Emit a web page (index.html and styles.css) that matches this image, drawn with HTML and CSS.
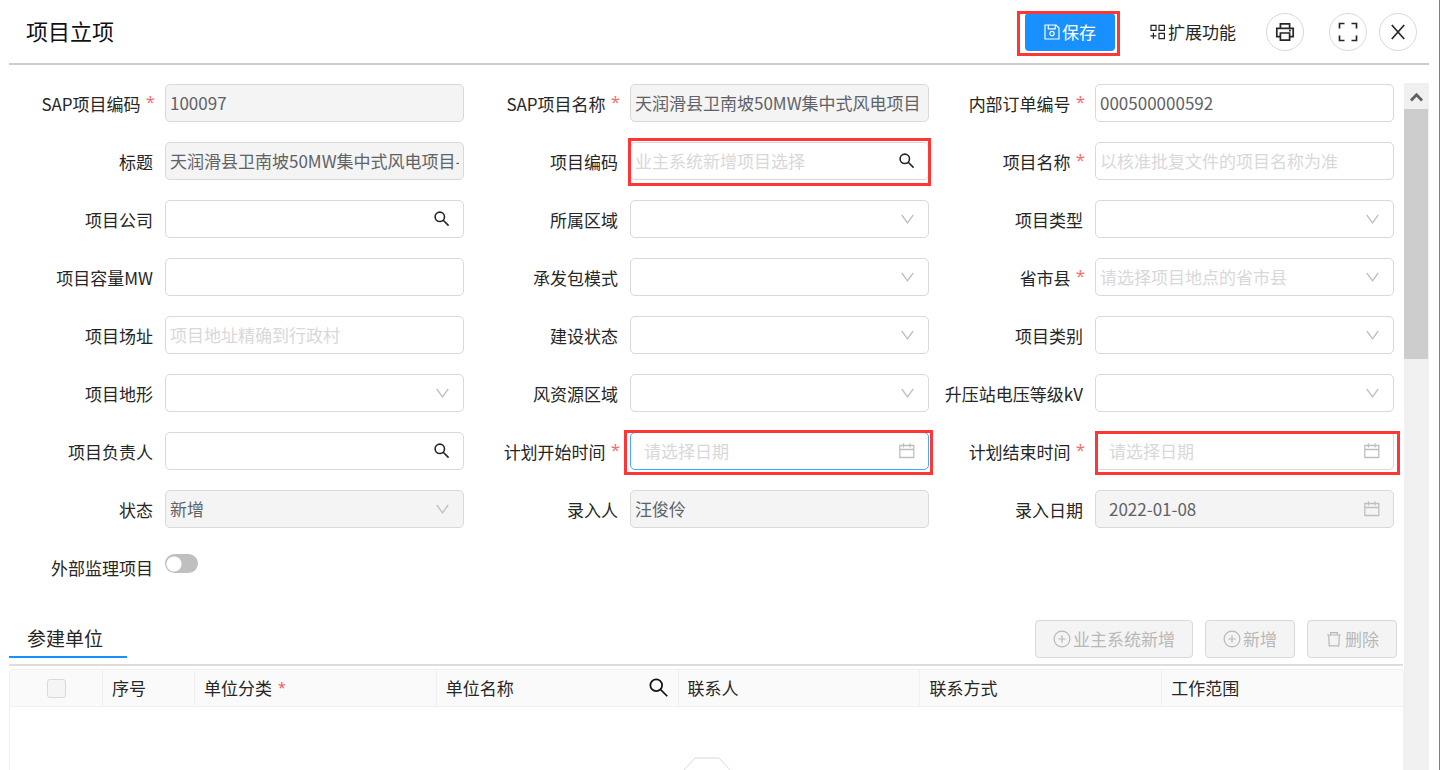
FILE: index.html
```html
<!DOCTYPE html>
<html lang="zh-CN">
<head>
<meta charset="utf-8">
<title>项目立项</title>
<link rel="stylesheet" href="styles.css">
</head>
<body>
<svg class="sprite" aria-hidden="true">
  <symbol id="i-search" viewBox="0 0 16 16"><circle cx="5.8" cy="5.8" r="4.7"/><path d="M9.2 9.2L14.6 14.6"/></symbol>
  <symbol id="i-down" viewBox="0 0 16 16"><path d="M2.8 4L8.5 11.8L14.2 4"/></symbol>
  <symbol id="i-cal" viewBox="0 0 16 16"><path d="M.8 2.5H14.8V14.5H.8ZM.8 6.5H14.8M4.5 .2V4.4M11 .2V4.4"/></symbol>
  <symbol id="i-plus" viewBox="0 0 18 18"><circle cx="9" cy="9" r="7.9"/><path d="M9 5.3V12.7M5.3 9H12.7"/></symbol>
  <symbol id="i-trash" viewBox="0 0 18 18"><path d="M2 5H16M5.6 5V2.6H12.4V5M3.7 5L4.2 15.8H13.8L14.3 5"/></symbol>
</svg>
<div class="page">
  <header class="header">
    <h1 class="title">项目立项</h1>
    <div class="marked">
      <button class="save" type="button">
        <svg class="icon-16" viewBox="0 0 16 16"><path d="M1 1H12L15 4V15H1ZM4.3 1V4.8H11.2V1"/><circle cx="8" cy="9.6" r="2.2"/></svg>
        <span>保存</span>
      </button>
      <span class="mark mark-save"></span>
    </div>
    <button class="more" type="button">
      <svg class="icon-16" viewBox="0 0 16 16"><path d="M1 1.4H6V6.4H1ZM9 1.4H14.4V6.4H9ZM9 9.4H14.4V14.6H9ZM3.4 8.8V14.8M.4 11.8H6.4"/></svg>
      <span>扩展功能</span>
    </button>
    <button class="round round-print" type="button" aria-label="打印">
      <svg class="icon-20" viewBox="0 0 20 20"><path d="M5.4 6.2V1.8H14.6V6.2M5.2 14.6H1.8V6.4H18.2V14.6H14.8M5.4 11H14.6V18.2H5.4ZM14 8.6H15.8"/></svg>
    </button>
    <button class="round round-full" type="button" aria-label="全屏">
      <svg class="icon-20" viewBox="0 0 20 20"><path d="M1.5 6.5V1.5H6.5M13.5 1.5H18.5V6.5M18.5 13.5V18.5H13.5M6.5 18.5H1.5V13.5"/></svg>
    </button>
    <button class="round" type="button" aria-label="关闭">
      <svg class="icon-20" viewBox="0 0 20 20"><path d="M3.8 3L16.2 17M16.2 3L3.8 17"/></svg>
    </button>
  </header>

  <div class="body">
    <main class="content">
      <form class="form">
        <div class="item"><label class="label required" for="f1">SAP项目编码</label><div class="field"><input class="control" id="f1" value="100097" disabled></div></div>
        <div class="item"><label class="label required" for="f2">SAP项目名称</label><div class="field"><input class="control" id="f2" value="天润滑县卫南坡50MW集中式风电项目" disabled></div></div>
        <div class="item"><label class="label required" for="f3">内部订单编号</label><div class="field"><input class="control" id="f3" value="000500000592"></div></div>

        <div class="item"><label class="label" for="f4">标题</label><div class="field"><input class="control" id="f4" value="天润滑县卫南坡50MW集中式风电项目-" disabled></div></div>
        <div class="item"><label class="label" for="f5">项目编码</label><div class="field"><input class="control" id="f5" placeholder="业主系统新增项目选择"><svg class="suffix dark"><use href="#i-search"/></svg><span class="mark mark-code"></span></div></div>
        <div class="item"><label class="label required" for="f6">项目名称</label><div class="field"><input class="control" id="f6" placeholder="以核准批复文件的项目名称为准"></div></div>

        <div class="item"><label class="label" for="f7">项目公司</label><div class="field"><input class="control" id="f7"><svg class="suffix dark"><use href="#i-search"/></svg></div></div>
        <div class="item"><label class="label" for="f8">所属区域</label><div class="field"><select class="control" id="f8"><option></option></select><svg class="suffix"><use href="#i-down"/></svg></div></div>
        <div class="item"><label class="label" for="f9">项目类型</label><div class="field"><select class="control" id="f9"><option></option></select><svg class="suffix"><use href="#i-down"/></svg></div></div>

        <div class="item"><label class="label" for="f10">项目容量MW</label><div class="field"><input class="control" id="f10"></div></div>
        <div class="item"><label class="label" for="f11">承发包模式</label><div class="field"><select class="control" id="f11"><option></option></select><svg class="suffix"><use href="#i-down"/></svg></div></div>
        <div class="item"><label class="label required" for="f12">省市县</label><div class="field"><select class="control empty" id="f12"><option>请选择项目地点的省市县</option></select><svg class="suffix"><use href="#i-down"/></svg></div></div>

        <div class="item"><label class="label" for="f13">项目场址</label><div class="field"><input class="control" id="f13" placeholder="项目地址精确到行政村"></div></div>
        <div class="item"><label class="label" for="f14">建设状态</label><div class="field"><select class="control" id="f14"><option></option></select><svg class="suffix"><use href="#i-down"/></svg></div></div>
        <div class="item"><label class="label" for="f15">项目类别</label><div class="field"><select class="control" id="f15"><option></option></select><svg class="suffix"><use href="#i-down"/></svg></div></div>

        <div class="item"><label class="label" for="f16">项目地形</label><div class="field"><select class="control" id="f16"><option></option></select><svg class="suffix"><use href="#i-down"/></svg></div></div>
        <div class="item"><label class="label" for="f17">风资源区域</label><div class="field"><select class="control" id="f17"><option></option></select><svg class="suffix"><use href="#i-down"/></svg></div></div>
        <div class="item"><label class="label" for="f18">升压站电压等级kV</label><div class="field"><select class="control" id="f18"><option></option></select><svg class="suffix"><use href="#i-down"/></svg></div></div>

        <div class="item"><label class="label" for="f19">项目负责人</label><div class="field"><input class="control" id="f19"><svg class="suffix dark"><use href="#i-search"/></svg></div></div>
        <div class="item"><label class="label required" for="f20">计划开始时间</label><div class="field"><input class="control date active" id="f20" placeholder="请选择日期"><svg class="suffix"><use href="#i-cal"/></svg><span class="mark mark-start"></span></div></div>
        <div class="item"><label class="label required" for="f21">计划结束时间</label><div class="field"><input class="control date" id="f21" placeholder="请选择日期"><svg class="suffix"><use href="#i-cal"/></svg><span class="mark mark-end"></span></div></div>

        <div class="item"><label class="label" for="f22">状态</label><div class="field"><select class="control" id="f22" disabled><option>新增</option></select><svg class="suffix"><use href="#i-down"/></svg></div></div>
        <div class="item"><label class="label" for="f23">录入人</label><div class="field"><input class="control" id="f23" value="汪俊伶" disabled></div></div>
        <div class="item"><label class="label" for="f24">录入日期</label><div class="field"><input class="control date" id="f24" value="2022-01-08" disabled><svg class="suffix"><use href="#i-cal"/></svg></div></div>

        <div class="item"><label class="label" for="f25">外部监理项目</label><div class="field"><input class="switch" id="f25" type="checkbox" role="switch"></div></div>
      </form>

      <section>
        <div class="section-bar">
          <h2 class="tab">参建单位</h2>
          <div class="actions">
            <button class="action" type="button" disabled><svg class="icon-18"><use href="#i-plus"/></svg><span>业主系统新增</span></button>
            <button class="action" type="button" disabled><svg class="icon-18"><use href="#i-plus"/></svg><span>新增</span></button>
            <button class="action" type="button" disabled><svg class="icon-18"><use href="#i-trash"/></svg><span>删除</span></button>
          </div>
        </div>
        <table class="table">
          <colgroup><col class="col-check"><col class="col-no"><col><col><col><col><col></colgroup>
          <thead>
            <tr>
              <th class="center"><input class="check" type="checkbox" aria-label="全选" disabled></th>
              <th>序号</th>
              <th>单位分类<span class="th-star">*</span></th>
              <th><div class="th-search"><span>单位名称</span><svg class="icon-20" viewBox="0 0 16 16"><use href="#i-search"/></svg></div></th>
              <th>联系人</th>
              <th>联系方式</th>
              <th>工作范围</th>
            </tr>
          </thead>
          <tbody>
            <tr><td colspan="7"><svg class="empty-box" viewBox="0 0 76 60"><path d="M1 28L26 1H50L75 28V56H1Z"/></svg></td></tr>
          </tbody>
        </table>
      </section>
    </main>
    <div class="scrollbar">
      <svg class="scroll-up" viewBox="0 0 25 26"><path d="M7 17.5L12.5 11.8L18 17.5"/></svg>
      <div class="scroll-thumb"></div>
    </div>
  </div>
</div>
</body>
</html>
```
FILE: styles.css
```css
* { box-sizing: border-box; }
body {
  margin: 0;
  background: #fff;
  color: #262626;
  font: 17px/24px "Noto Sans CJK SC", "Noto Sans", sans-serif;
}
button, input, select { font: inherit; color: inherit; margin: 0; }
svg { fill: none; stroke: currentColor; flex: none; display: block; }
.sprite { position: absolute; width: 0; height: 0; }

.page {
  display: flex;
  flex-direction: column;
  height: 100vh;
  overflow: hidden;
  padding: 0 10px 0 9px;
  border-right: 1px solid #808080;
}

/* Header */
.header {
  display: flex;
  align-items: center;
  flex: none;
  height: 65px;
  padding: 0 12px 0 17px;
  border-bottom: 2px solid #cdcdcd;
}
.title {
  flex: 1;
  margin: 0;
  padding-bottom: 4px;
  color: #111;
  font-size: 22px;
  font-weight: 400;
  line-height: 32px;
}
.marked { position: relative; }
.save {
  display: flex;
  align-items: center;
  justify-content: center;
  gap: 2px;
  width: 90px;
  height: 38px;
  padding: 0;
  border: 0;
  border-radius: 4px;
  background: #1890ff;
  color: #fff;
}
.more {
  display: flex;
  align-items: center;
  gap: 2px;
  margin: 0 30px 0 35px;
  padding: 0;
  border: 0;
  background: none;
}
.round {
  display: flex;
  align-items: center;
  justify-content: center;
  width: 38px;
  height: 38px;
  padding: 0;
  border: 1px solid #d9d9d9;
  border-radius: 50%;
  background: #fff;
}
.round-print { margin-right: 25px; }
.round-full { margin-right: 12px; }
.icon-16 { width: 16px; height: 16px; stroke-width: 1.2; }
.icon-18 { width: 18px; height: 18px; stroke-width: 1.2; }
.icon-20 { width: 20px; height: 20px; stroke-width: 1.7; }

/* Highlight frames drawn over controls */
.mark { position: absolute; border: 3px solid #ff3636; pointer-events: none; }
.mark-save { inset: -2px -5px -5px -8px; }
.mark-code { inset: -4px -2px -6px -2px; }
.mark-start { inset: -2px -4px -5px -6px; }
.mark-end { inset: -1px -6px -5px 0; }

/* Form */
.body { display: flex; flex: 1; min-height: 0; padding-top: 18px; }
.content { flex: 1; min-width: 0; overflow: hidden; }
.form {
  display: grid;
  grid-template-columns: repeat(3, 1fr);
  row-gap: 20px;
  padding-top: 1px;
}
.item {
  display: grid;
  grid-template-columns: 156px 1fr;
  grid-template-rows: 38px;
  padding-right: 10px;
}
.label {
  padding: 0 12px 0 0;
  line-height: 40px;
  text-align: right;
  white-space: nowrap;
}
.required { padding-right: 10px; }
.required::after {
  content: "*";
  margin-left: 5px;
  color: #f56c6c;
  font-family: "Open Sans", sans-serif;
  font-weight: 500;
  line-height: 20px;
  vertical-align: 3px;
}
.field { position: relative; min-width: 0; }
.control {
  display: block;
  width: 100%;
  height: 38px;
  padding: 0 4px 2px;
  border: 1px solid #d9d9d9;
  border-radius: 5px;
  background: #fff;
  color: #606266;
  appearance: none;
  outline: 0;
}
select.control { padding-bottom: 0; }
.control:disabled { background: #f4f4f4; color: #606266; opacity: 1; }
.control::placeholder { color: #d8d8d8; opacity: 1; }
.control.empty { color: #d8d8d8; }
.control.date { padding-left: 13px; }
.active { border-color: #40a9ff; }
.suffix {
  position: absolute;
  top: 11px;
  right: 14px;
  width: 16px;
  height: 16px;
  color: #bfbfbf;
  stroke-width: 1.3;
  pointer-events: none;
}
.dark { color: #262626; stroke-width: 1.6; }
.switch {
  display: block;
  width: 33px;
  height: 19px;
  margin-top: 6px;
  border-radius: 10px;
  background: radial-gradient(circle at 9px 10px, #fff 7px, #bfbfbf 8px);
  appearance: none;
}

/* Participating units */
.section-bar {
  display: flex;
  justify-content: space-between;
  align-items: flex-end;
  margin: 34px 1px 3px 0;
  padding-bottom: 6px;
  border-bottom: 2px solid #ddd;
}
.tab {
  margin: 0;
  padding: 0 24px 4px 18px;
  border-bottom: 2px solid #1890ff;
  font-size: 19px;
  font-weight: 400;
  line-height: 28px;
}
.actions { display: flex; gap: 12px; padding-right: 6px; }
.action {
  display: flex;
  align-items: center;
  gap: 2px;
  height: 38px;
  padding: 0 17px;
  border: 1px solid #d9d9d9;
  border-radius: 4px;
  background: #f4f4f4;
  color: #b8b8b8;
}
.table {
  width: 100%;
  border-collapse: separate;
  border-spacing: 0;
  table-layout: fixed;
}
.col-check { width: 94px; }
.col-no { width: 92px; }
.table th {
  height: 38px;
  padding: 0 9px;
  border: 1px solid #f0f0f0;
  border-left: 0;
  background: #fafafa;
  font-weight: 400;
  text-align: left;
}
.table th:first-child { border-left: 1px solid #f0f0f0; border-top-left-radius: 4px; }
.table th:last-child { border-top-right-radius: 4px; }
.table .center { text-align: center; }
.table td {
  padding: 50px 0 20px;
  border: 1px solid #f0f0f0;
  border-width: 0 1px;
}
.check {
  display: block;
  width: 19px;
  height: 19px;
  margin: 0 auto;
  border: 1px solid #d9d9d9;
  border-radius: 3px;
  background: #f5f5f5;
  appearance: none;
}
.th-star { margin-left: 6px; color: #ff4d4f; font: 14px/20px "Open Sans", sans-serif; vertical-align: 2px; }
.th-search { display: flex; align-items: center; justify-content: space-between; }
.th-search svg { color: #111; stroke-width: 1.4; }
.empty-box { width: 76px; margin: 0 auto; color: #d9d9d9; stroke-width: 1; }

/* Scroll bar */
.scrollbar { flex: none; width: 25px; background: #f0f0f0; }
.scroll-up { width: 25px; height: 26px; color: #606060; stroke-width: 2.8; }
.scroll-thumb { width: 24px; height: 250px; background: #cdcdcd; }
```
